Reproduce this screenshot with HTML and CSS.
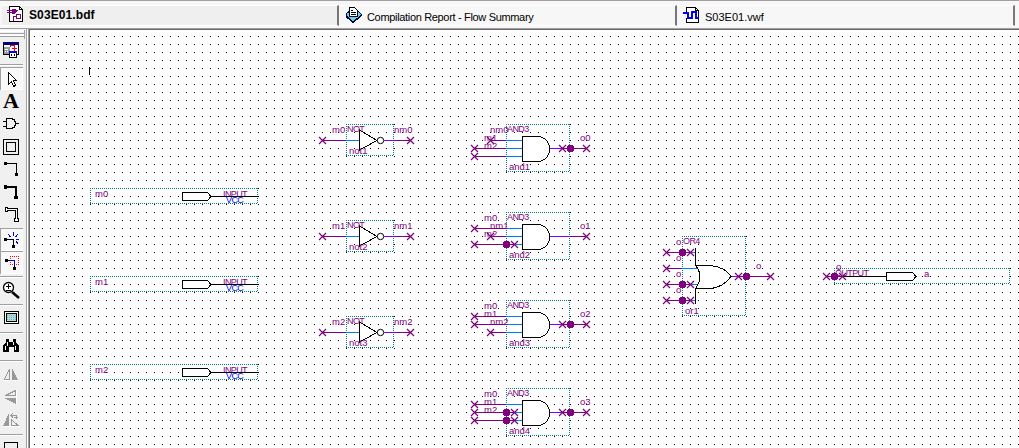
FILE: index.html
```html
<!DOCTYPE html>
<html lang="en">
<head>
<meta charset="utf-8">
<title>S03E01.bdf</title>
<link rel="stylesheet" href="styles.css">
</head>
<body>
<div class="app">
  <header class="tabs">
    <div class="tab tab-active">
      <svg class="tab-icon" width="17" height="17" viewBox="0 0 17 17">
        <path d="M2.500 .5H12.500L15.500 3.500V15.500H2.500Z" fill="#fff" stroke="#000"/><path d="M12.500.5V3.500H15.500" fill="none" stroke="#000"/>
        <path d="M0 4.500H11M0 6.500H5M6.500 15V10.500H14" fill="none" stroke="#800080"/>
        <path d="M5 3H8L10 5L8 8H5Z" fill="#800080"/><path d="M9.500 8.500h4v4h-4z" fill="#fff" stroke="#800080"/>
      </svg>
      <span>S03E01.bdf</span>
    </div>
    <div class="tab tab-report">
      <svg class="tab-icon" width="17" height="17" viewBox="0 0 17 17">
        <path d="M1 7L6 3H12L16 7V9L8 15L1 10Z" fill="#5fd5e8" stroke="#000080"/><path d="M1 9L8 15L16 9" fill="none" stroke="#000040" stroke-width="1.500"/>
        <path d="M4.500.5H9.500L12.500 3.500V9.500H4.500Z" fill="#fff" stroke="#000"/><path d="M6 3.500h2M6 5.500h5M6 7.500h5" stroke="#000"/>
      </svg>
      <span>Compilation Report - Flow Summary</span>
    </div>
    <div class="tab tab-wave">
      <svg class="tab-icon" width="17" height="17" viewBox="0 0 17 17">
        <path d="M3.500 5V.5H12.500L15.500 3.500V15.500H3.500V11" fill="#fff" stroke="#000"/><path d="M12.500.5V3.500H15.500" fill="none" stroke="#000"/>
        <path d="M0 6H5V11H9V5H13V11H16" fill="none" stroke="#00f" stroke-width="2"/>
      </svg>
      <span>S03E01.vwf</span>
    </div>
  </header>
  <main class="work">
    <nav class="tools">
      <div class="grip"></div>
      <svg class="tool" viewBox="0 0 23 23"><path d="M3.500 3.500h15v12h-15z" fill="#fff" stroke="#000"/><path d="M3 3h16v3H3z" fill="#000080"/><path d="M4 8h6v7H4z" fill="#999"/><path d="M5 10h3v1H5zM5 12h1v1H5zM7 12h1v1H7z" fill="#fff"/><path d="M10 7.500l1-1h3v4M12 9.500h5M14.500 7v5" stroke="red" fill="none"/><path d="M9.500 12.500h7v6h-7z" fill="#fff" stroke="#000"/><path d="M9 12h8v2H9z" fill="#00f"/><path d="M11 15h1v2h-1zM14 15h1v2h-1z"/></svg>
      <div class="sep"></div>
      <svg class="tool pressed" viewBox="0 0 23 23"><path d="M8.500 5.500v12l3-3 2 5 2-1-2-5h3z" fill="#fff" stroke="#000"/></svg>
      <svg class="tool" viewBox="0 0 23 23"><text x="3" y="18" class="letter" textLength="16" lengthAdjust="spacingAndGlyphs">A</text></svg>
      <svg class="tool" viewBox="0 0 23 23"><path d="M6.500 5.500h5q4 1 4 5t-4 5h-5zM3 8.500h3M3 13.500h3M16 10.500h3" fill="none" stroke="#000" stroke-width="1.200"/></svg>
      <svg class="tool" viewBox="0 0 23 23"><path d="M3.500 3.500h15v15h-15zM6.500 6.500h9v9h-9z" fill="none" stroke="#000"/></svg>
      <svg class="tool" viewBox="0 0 23 23"><path d="M5 4.500h11.500V15" fill="none" stroke="#000"/><path d="M4 3h3v3H4zM15 14h3v3h-3z"/></svg>
      <svg class="tool" viewBox="0 0 23 23"><path d="M5 5h11v11" fill="none" stroke="#000" stroke-width="2"/><path d="M4 3h3v4H4zM14 14h4v3h-4z"/></svg>
      <svg class="tool" viewBox="0 0 23 23"><path d="M5.500 2.500h2v1h10v10h1v3h-4v-3h1v-8h-8v1h-2z" fill="#fff" stroke="#000"/></svg>
      <svg class="tool pressed" viewBox="0 0 23 23"><path d="M5 11.500h8.500V18" fill="none" stroke="#000"/><path d="M4 10h3v3H4zM12 17h3v3h-3z"/><path d="M13.500 4v4M8 6l2.500 3M18 6l-2.500 3M16 11.500h3M16 13.500l2 2" stroke="#00f"/></svg>
      <svg class="tool pressed" viewBox="0 0 23 23"><path d="M10 5.500h9M10 13.500h9M10.500 5v9M18.500 5v9" fill="none" stroke="red" stroke-dasharray="1 1"/><path d="M5 9.500h9.500V17" fill="none" stroke="#000"/><path d="M10 9.500h4.500V14" fill="none" stroke="#00f"/><path d="M5 8h3v3H5zM13 16h3v3h-3z"/></svg>
      <div class="sep"></div>
      <svg class="tool" viewBox="0 0 23 23"><g class="soft"><circle cx="8.500" cy="8.500" r="5" fill="#fff" stroke="#000" stroke-width="1.300"/><path d="M12 13l7 6" stroke="#000" stroke-width="2.500"/></g><path d="M6 7.500h5M8.500 5v5M6 11.500h5" stroke="#000"/></svg>
      <div class="sep"></div>
      <svg class="tool" viewBox="0 0 23 23"><path d="M4.500 4.500h14v12h-14z" fill="#fff" stroke="#000"/><path d="M6.500 6.500h10v8h-10z" fill="#b5dade" stroke="#000"/><path d="M7 8.500h9M7 10.500h9M7 12.500h9" stroke="#6cbcc4" stroke-dasharray="1 1"/></svg>
      <div class="sep"></div>
      <svg class="tool" viewBox="0 0 23 23"><path d="M6 4h3v3h4V4h3v3l3 4v6h-5v-5h-5v5H3v-6l3-4z"/><path d="M7.500 7v4M5.500 11v4M13.500 7v3M15.500 11v4" stroke="#fff"/></svg>
      <div class="sep"></div>
      <svg class="tool" viewBox="0 0 23 23"><path d="M9.500 6v10h-5z" fill="#eee" stroke="#999"/><path d="M12 5l6 12h-6z" fill="#999"/><path d="M4 17.500h6M13 17.500h6" stroke="#fff"/></svg>
      <svg class="tool" viewBox="0 0 23 23"><path d="M15.500 4.500v5h-10z" fill="#eee" stroke="#999"/><path d="M4 12h12v6z" fill="#999"/><path d="M16.500 4v14" stroke="#fff"/></svg>
      <svg class="tool" viewBox="0 0 23 23"><path d="M9 4v13H3z" fill="#999"/><path d="M11.500 11v5.500h7zM11 6.500h5v3M13 4l-2 2.500 2 2M14 8.500h4" fill="none" stroke="#999"/><path d="M4 17.500h15" stroke="#fff"/></svg>
      <div class="sep"></div>
      <svg class="tool" viewBox="0 0 23 23"><path d="M4.500 5.500h13v13h-13z" fill="none" stroke="#000" stroke-width="1.500"/></svg>
    </nav>
    <section class="canvas">
      <svg class="sheet" width="989" height="418" viewBox="30 30 989 418">
        <defs>
          <pattern id="grid" x="34" y="36" width="8" height="8" patternUnits="userSpaceOnUse"><rect width="1" height="1"/></pattern>
          <g id="x"><path class="wire soft" stroke-width="1.200" d="M-3-3L4 4M4-3L-3 4"/></g>
          <g id="dot"><path class="node" d="M-2-3h5v1h1v5h-1v1h-5v-1h-1v-5h1z"/></g>
          <g id="input">
            <path class="bound" d="M0 .5H168M0 15.500H168M.5 0V16M167.500 0V16"/>
            <path class="ink body" d="M92.500 4.500H117.500L121 8.500L117.500 12.500H92.500Z"/>
            <text class="type" x="133" y="8.500">INPUT</text><text class="type vcc" x="136" y="15">VCC</text>
            <path class="ink" d="M121 8.500H168"/>
          </g>
          <g id="not">
            <path class="bound" d="M0 .5H48M0 31.500H48M.5 0V32M47.500 0V32"/>
            <path class="wire" d="M-24 16.500H0M47 16.500H65"/><path class="in" d="M0 16.500H13"/><path class="out" d="M38 16.500H47"/>
            <path class="ink body" d="M13.500 6V26L31 16.500Z"/><circle class="ink body soft" cx="34.500" cy="16.500" r="3.200"/>
            <use href="#x" x="-24" y="16"/><use href="#x" x="64" y="16"/>
            <text class="type" x="1" y="8">NOT</text>
          </g>
          <g id="and">
            <path class="bound" d="M0 .5H64M0 47.500H64M.5 0V48M63.500 0V48"/>
            <path class="in" d="M0 16.500H16M0 24.500H16M0 32.500H16"/><path class="out" d="M44 24.500H64"/><path class="wire" d="M64 24.500H81"/>
            <path class="ink body" d="M16.500 12.500H31C39 12.500 43.500 18 43.500 25S39 37.500 31 37.500H16.500Z"/>
            <use href="#x" x="80" y="24"/><text class="type" x="1" y="8">AND3</text>
          </g>
          <g id="outnode"><path class="wire" d="M-8 .5H0"/><use href="#x" x="-8"/><use href="#dot"/></g>
          <g id="tap"><path class="wire" d="M0 .5H8"/><use href="#dot"/><use href="#x" x="8"/></g>
          <g id="long"><path class="wire" d="M0 .5H32"/><use href="#x"/></g>
          <g id="short"><path class="wire" d="M0 .5H16"/><use href="#x"/></g>
        </defs>
        <rect x="30" y="30" width="989" height="418" fill="url(#grid)"/>
        <path class="ink" d="M89.500 67V75"/>

        <use href="#input" x="90" y="188"/><use href="#input" x="90" y="276"/><use href="#input" x="90" y="364"/>
        <g class="name"><text x="95" y="197">m0</text><text x="95" y="285">m1</text><text x="95" y="373">m2</text></g>

        <use href="#not" x="346" y="124"/><use href="#not" x="346" y="220"/><use href="#not" x="346" y="316"/>
        <g class="name">
          <text x="332" y="133">m0</text><text x="394" y="133">nm0</text><text x="349" y="154">not1</text>
          <text x="332" y="229">m1</text><text x="394" y="229">nm1</text><text x="349" y="250">not2</text>
          <text x="332" y="325">m2</text><text x="394" y="325">nm2</text><text x="349" y="346">not3</text>
        </g>

        <use href="#and" x="506" y="124"/><use href="#and" x="506" y="212"/><use href="#and" x="506" y="300"/><use href="#and" x="506" y="388"/>
        <use href="#short" x="490" y="140"/><use href="#long" x="474" y="148"/><use href="#long" x="474" y="156"/>
        <use href="#long" x="474" y="228"/><use href="#short" x="490" y="236"/><use href="#long" x="474" y="244"/>
        <use href="#long" x="474" y="316"/><use href="#long" x="474" y="324"/><use href="#short" x="490" y="332"/>
        <use href="#long" x="474" y="404"/><use href="#long" x="474" y="412"/><use href="#long" x="474" y="420"/>
        <use href="#tap" x="506" y="244"/><use href="#tap" x="506" y="412"/><use href="#tap" x="506" y="420"/>
        <use href="#outnode" x="570" y="148"/><use href="#outnode" x="570" y="324"/><use href="#outnode" x="570" y="412"/>
        <g class="name">
          <text x="490" y="133">nm0</text><text x="484" y="141">m1</text><text x="484" y="149">m2</text><text x="509" y="170">and1</text><text x="580" y="141">o0</text>
          <text x="484" y="221">m0</text><text x="490" y="229">nm1</text><text x="484" y="237">m2</text><text x="509" y="258">and2</text><text x="580" y="229">o1</text>
          <text x="484" y="309">m0</text><text x="484" y="317">m1</text><text x="490" y="325">nm2</text><text x="509" y="346">and3</text><text x="580" y="317">o2</text>
          <text x="484" y="397">m0</text><text x="484" y="405">m1</text><text x="484" y="413">m2</text><text x="509" y="434">and4</text><text x="580" y="405">o3</text>
        </g>

        <path class="bound" d="M682 236.500H746M682 315.500H746M682.500 236V316M745.500 236V316"/>
        <path class="body" d="M695.500 265.500H709C718 265.500 727 270 731 276.500C727 283 718 288.500 709 288.500H695.500Z"/>
        <path class="in" d="M682 268.500H697M690 252.500H695M690 284.500H697M690 300.500H695"/>
        <path class="wire" d="M666 252.500H690M666 268.500H682M666 284.500H690M666 300.500H690M746 276.500H770"/><path class="out" d="M731 276.500H746"/>
        <path class="ink" d="M695.500 248V266M695.500 288V304M695.500 265.500H709C718 265.500 727 270 731 276.500C727 283 718 288.500 709 288.500H695.500M695.500 265.500Q704.500 276.500 695.500 288.500"/>
        <use href="#x" x="666" y="252"/><use href="#x" x="666" y="268"/><use href="#x" x="666" y="284"/><use href="#x" x="666" y="300"/>
        <use href="#tap" x="682" y="252"/><use href="#tap" x="682" y="284"/><use href="#tap" x="682" y="300"/>
        <use href="#outnode" x="746" y="276"/><use href="#x" x="770" y="276"/>
        <text class="type" x="683" y="244">OR4</text>
        <g class="name"><text x="676" y="245">o</text><text x="676" y="261">o</text><text x="676" y="277">o</text><text x="676" y="293">o</text><text x="685" y="314">or1</text><text x="756" y="269">o</text></g>

        <path class="bound" d="M834 268.500H1010M834 283.500H1010M834.500 268V284M1009.500 268V284"/>
        <path class="ink body" d="M886.500 272.500H912.500L916 276.500L912.500 280.500H886.500Z"/>
        <text class="type" x="835" y="276">OUTPUT</text>
        <path class="ink" d="M842 276.500H886"/>
        <path class="wire" d="M826 276.500H842"/><use href="#x" x="826" y="276"/><use href="#tap" x="834" y="276"/>
        <g class="name"><text x="836" y="270">o</text><text x="924" y="277">a</text></g>
      </svg>
    </section>
  </main>
</div>
</body>
</html>
```
FILE: styles.css
```css
* { box-sizing: border-box; }
body { margin: 0; overflow: hidden; background: #f0f0f0; font-family: "Liberation Sans", Arial, sans-serif; }
.app { width: 1019px; height: 448px; display: flex; flex-direction: column; overflow: hidden; }
.tabs { height: 29px; flex: none; display: flex; padding: 4px 0 2px 2px; background: #f8f6f7; border-top: 1px solid #a0a0a0; border-bottom: 1px solid #a0a0a0; }
.tab { height: 21px; display: flex; align-items: center; gap: 5px; padding: 4px 0 0 6px; background: #f7f7f7; border-top: 1px solid #fff; border-bottom: 1px solid #fff; border-right: 2px solid #777; font-size: 11px; line-height: 14px; white-space: nowrap; color: #000; }
.tab-active { width: 337px; padding: 0 0 2px 5px; gap: 5px; background: #efefef; font-weight: bold; font-size: 12px; letter-spacing: .1px; }
.tab-report { width: 338px; }
.tab-report span { letter-spacing: -.33px; }
.tab-wave { width: 338px; }
.tab-report span, .tab-wave span { margin-top: -2px; }
.tab-icon { flex: none; shape-rendering: crispEdges; }
.tab-report .tab-icon, .tab-wave .tab-icon { margin-top: -4px; }
.work { flex: 1; min-height: 0; display: flex; }
.tools { width: 29px; flex: none; display: flex; flex-direction: column; padding-top: 1px; overflow: hidden; background: linear-gradient(90deg, #f0f0f0 26px, #a0a0a0 26px 27px, #fff 27px 28px, #a0a0a0 28px); }
.grip { width: 25px; height: 9px; flex: none; border-right: 1px solid #a0a0a0; background: linear-gradient(#fff 0 2px, #f0f0f0 2px 3px, #a0a0a0 3px 4px, #fff 4px 6px, #a0a0a0 6px 7px, #f0f0f0 7px); }
.tool { display: block; flex: none; width: 23px; height: 23px; shape-rendering: crispEdges; }
.pressed { background: #f8f8f8; box-shadow: inset 1px 1px #a0a0a0, inset -1px -1px #fff; }
.sep { width: 23px; height: 5px; flex: none; background: linear-gradient(#f0f0f0 2px, #a0a0a0 2px 3px, #fff 3px 4px, #f0f0f0 4px); }
.letter { font: bold 20px "Liberation Serif", serif; }
.canvas { flex: 1; min-width: 0; background: #fff; border-top: 1px solid #696969; border-left: 1px solid #696969; overflow: hidden; }
.sheet { display: block; shape-rendering: crispEdges; }
.soft { shape-rendering: auto; }
.bound { fill: none; stroke: #008080; stroke-dasharray: 1 1; }
.wire { fill: none; stroke: #800080; }
.in { fill: none; stroke: #0080ff; }
.out { fill: none; stroke: #8000ff; }
.ink { fill: none; stroke: #000; }
.body { fill: #fff; }
.node { fill: #800080; }
.name { font-size: 9.5px; fill: #800080; }
.type { font-size: 9px; letter-spacing: -.6px; fill: #800080; }
.vcc { fill: #00f; }
```
